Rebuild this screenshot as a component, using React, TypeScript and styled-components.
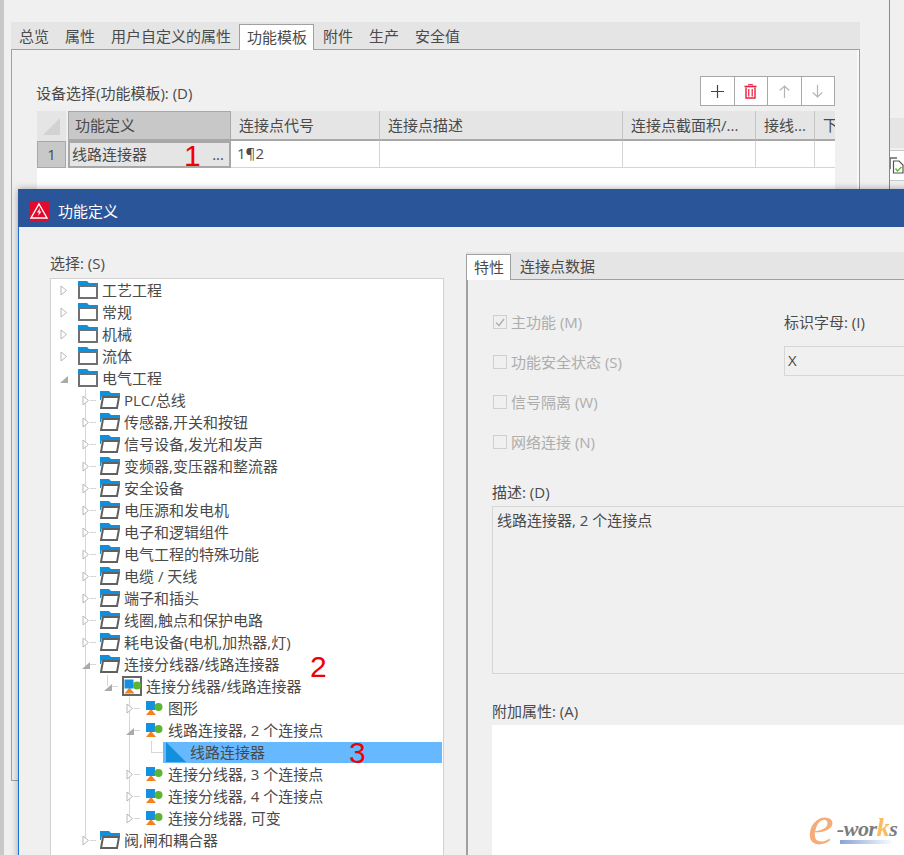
import React from "react";
import styled, { createGlobalStyle } from "styled-components";

type NodeIcon = "closed" | "open" | "framed" | "type" | "item";

interface TreeNode {
  label: string;
  depth: number;
  icon: NodeIcon;
  expander?: "closed" | "open";
  selected?: boolean;
  // vertical tree lines: [column, "full" or "top"]
  guides?: [number, "full" | "top"][];
}

const branch = (label: string, extra: Partial<TreeNode> = {}): TreeNode => ({
  label,
  depth: 1,
  icon: "open",
  expander: "closed",
  guides: [[1, "full"]],
  ...extra,
});

const root = (label: string, expander: "closed" | "open" = "closed"): TreeNode => ({
  label,
  depth: 0,
  icon: "closed",
  expander,
});

const typeNode = (label: string, extra: Partial<TreeNode> = {}): TreeNode => ({
  label,
  depth: 3,
  icon: "type",
  expander: "closed",
  guides: [[1, "full"], [3, "full"]],
  ...extra,
});

const treeNodes: TreeNode[] = [
  root("工艺工程"),
  root("常规"),
  root("机械"),
  root("流体"),
  root("电气工程", "open"),
  branch("PLC/总线"),
  branch("传感器,开关和按钮"),
  branch("信号设备,发光和发声"),
  branch("变频器,变压器和整流器"),
  branch("安全设备"),
  branch("电压源和发电机"),
  branch("电子和逻辑组件"),
  branch("电气工程的特殊功能"),
  branch("电缆 / 天线"),
  branch("端子和插头"),
  branch("线圈,触点和保护电路"),
  branch("耗电设备(电机,加热器,灯)"),
  branch("连接分线器/线路连接器", { expander: "open" }),
  {
    label: "连接分线器/线路连接器",
    depth: 2,
    icon: "framed",
    expander: "open",
    guides: [[1, "full"], [2, "top"]],
  },
  typeNode("图形"),
  typeNode("线路连接器, 2 个连接点", { expander: "open" }),
  {
    label: "线路连接器",
    depth: 4,
    icon: "item",
    selected: true,
    guides: [[1, "full"], [3, "full"], [4, "top"]],
  },
  typeNode("连接分线器, 3 个连接点"),
  typeNode("连接分线器, 4 个连接点"),
  typeNode("连接分线器, 可变", { guides: [[1, "full"], [3, "top"]] }),
  branch("阀,闸和耦合器", { guides: [[1, "top"]] }),
];

const mainTabs = ["总览", "属性", "用户自定义的属性", "功能模板", "附件", "生产", "安全值"];
const headers = [
  { label: "连接点代号", width: 149 },
  { label: "连接点描述", width: 243 },
  { label: "连接点截面积/...", width: 133 },
  { label: "接线...", width: 59 },
  { label: "下", width: 40 },
];
const checks = [
  { label: "主功能 (M)", checked: true },
  { label: "功能安全状态 (S)", checked: false },
  { label: "信号隔离 (W)", checked: false },
  { label: "网络连接 (N)", checked: false },
];

const GlobalStyle = createGlobalStyle`
  html, body {
    margin: 0;
    padding: 0;
    background: #f0f0f0;
  }
  * {
    box-sizing: border-box;
  }
`;

const Page = styled.div`
  position: relative;
  display: flex;
  width: 904px;
  height: 855px;
  overflow: hidden;
  background: #f0f0f0;
  color: #4a4a4a;
  font: 15px/20px "Open Sans", "Noto Sans CJK SC", sans-serif;
`;

const EdgeStripe = styled.div`
  flex: none;
  width: 4px;
  background: #c8c8c8;
`;

const BackWindow = styled.div`
  flex: none;
  width: 849px;
  margin: 22px 0 0 7px;
`;

const TabStrip = styled.div`
  display: flex;
  height: 27px;
  background: #e5e5e5;
`;

const MainTab = styled.div<{ $active?: boolean }>`
  position: relative;
  z-index: 1;
  height: ${(p) => (p.$active ? "26px" : "27px")};
  margin-top: ${(p) => (p.$active ? "2px" : "0")};
  margin-right: ${(p) => (p.$active ? "1px" : "0")};
  padding: 0 ${(p) => (p.$active ? "6px 0 7px" : "8px")};
  line-height: ${(p) => (p.$active ? "24px" : "28px")};
  background: ${(p) => (p.$active ? "#fff" : "transparent")};
  border: ${(p) => (p.$active ? "1px solid #a0a0a0" : "none")};
  border-bottom: none;
`;

const Pane = styled.div`
  height: 732px;
  padding: 26px 24px 0 25px;
  border: 1px solid #a0a0a0;
  box-shadow: inset -2px 0 0 #fafafa;
`;

const PaneHead = styled.div`
  display: flex;
  align-items: flex-end;
  justify-content: space-between;
  height: 30px;
  margin-bottom: 5px;
`;

const PaneLabel = styled.div`
  margin: 0 0 3px -1px;
`;

const Toolbar = styled.div`
  display: flex;
  width: 135px;
  height: 30px;
`;

const ToolButton = styled.div`
  flex: 1;
  display: flex;
  align-items: center;
  justify-content: center;
  background: #fff;
  border: 1px solid #a8a8a8;
  & + & {
    margin-left: -1px;
  }
`;

const Table = styled.div`
  width: 798px;
  height: 90px;
  overflow: hidden;
  background: #fff;
`;

const TableRow = styled.div<{ $height: number }>`
  display: flex;
  height: ${(p) => p.$height}px;
  background: #f0f0f0;
`;

const CornerCell = styled.div`
  flex: none;
  display: flex;
  align-items: center;
  justify-content: center;
  width: 31px;
  border-right: 2px solid #f0f0f0;
  background: #e5e5e5;
`;

const ActiveHead = styled.div`
  flex: none;
  width: 163px;
  padding: 0 6px;
  line-height: 27px;
  background: #c8c8c8;
  border: 1px solid #a8a8a8;
  border-bottom-width: 2px;
`;

const HeadCell = styled.div<{ $width: number }>`
  flex: none;
  width: ${(p) => p.$width}px;
  padding: 0 8px;
  line-height: 28px;
  white-space: nowrap;
  background: #e5e5e5;
  border-right: 1px solid #c4c4c4;
  border-bottom: 2px solid #a8a8a8;
`;

const RowNumber = styled.div`
  flex: none;
  width: 31px;
  border-right: 2px solid #f0f0f0;
  background: #c8c8c8;
  box-shadow: inset 0 0 0 1px #a8a8a8;
  text-align: center;
  line-height: 26px;
`;

const EditCell = styled.div`
  flex: none;
  display: flex;
  align-items: center;
  justify-content: space-between;
  width: 163px;
  padding: 0 5px 2px 2px;
  background: #e5e5e5;
  border: 2px solid #a8a8a8;
`;

const Ellipsis = styled.span`
  line-height: 28px;
`;

const BodyCell = styled.div<{ $width: number }>`
  flex: none;
  width: ${(p) => p.$width}px;
  padding: 0 6px;
  line-height: 25px;
  background: #fff;
  border-right: 1px solid #d4d4d4;
  border-bottom: 1px solid #d4d4d4;
`;

const SideWindow = styled.div`
  flex: 1;
  height: 189px;
  margin-left: 29px;
  padding-top: 118px;
  border-left: 1px solid #888;
`;

const SideBand = styled.div`
  height: 30px;
  background: #e5e5e5;
`;

const SideList = styled.div`
  display: flex;
  align-items: center;
  height: 31px;
  margin-top: 2px;
  background: #fff;
  border-top: 1px solid #c8c8c8;
  border-bottom: 1px solid #c8c8c8;
`;

// the dialog floats above the window behind it
const Dialog = styled.div`
  position: absolute;
  z-index: 2;
  left: 18px;
  top: 189px;
  width: 900px;
  height: 680px;
  background: #f0f0f0;
  border-left: 1px solid #1a6fd4;
  box-shadow: 0 0 7px rgba(0, 0, 0, 0.35);
`;

const TitleBar = styled.div`
  display: flex;
  align-items: center;
  gap: 9px;
  height: 38px;
  margin-left: -1px;
  padding: 5px 0 0 11px;
  background: #2a5599;
  color: #fff;
`;

const DialogBody = styled.div`
  display: flex;
  gap: 22px;
  padding: 25px 0 0 31px;
`;

const LeftColumn = styled.div`
  flex: none;
  width: 394px;
  padding-top: 1px;
`;

const FieldLabel = styled.div<{ $gap?: number; $top?: number }>`
  height: 20px;
  margin-top: ${(p) => p.$top ?? 0}px;
  margin-bottom: ${(p) => p.$gap ?? 4}px;
`;

const TreeBox = styled.div`
  height: 600px;
  background: #fff;
  border: 1px solid #d2d2d2;
  border-bottom: none;
`;

const Row = styled.div<{ $depth: number }>`
  position: relative;
  display: flex;
  align-items: center;
  height: 22px;
  padding-left: ${(p) => 9 + p.$depth * 22}px;
  white-space: nowrap;
`;

const Guide = styled.span<{ $column: number; $part: "full" | "top" }>`
  position: absolute;
  left: ${(p) => 12 + p.$column * 22}px;
  top: 0;
  width: 1px;
  height: ${(p) => (p.$part === "full" ? "22px" : "11px")};
  background: #d6d6d6;
`;

const Dash = styled.span<{ $depth: number; $leaf?: boolean }>`
  position: absolute;
  left: ${(p) => (p.$leaf ? 12 : 17) + p.$depth * 22}px;
  top: 11px;
  width: ${(p) => (p.$leaf ? 12 : 6)}px;
  height: 1px;
  background: #d6d6d6;
`;

const ExpanderSlot = styled.span`
  position: relative;
  z-index: 1;
  flex: none;
  display: flex;
  width: 8px;
  height: 11px;
  margin-right: 10px;
`;

const Item = styled.div<{ $selected?: boolean }>`
  position: relative;
  z-index: 1;
  flex: 1;
  display: flex;
  align-items: center;
  gap: 4px;
  height: 21px;
  margin: 0 1px 0 -3px;
  padding-left: 3px;
  background: ${(p) => (p.$selected ? "#66b8ff" : "transparent")};
`;

const IconSlot = styled.span`
  flex: none;
  display: flex;
  width: 20px;
  height: 20px;
  align-items: center;
  justify-content: center;
`;

const RightColumn = styled.div`
  flex: none;
  width: 470px;
`;

const SubTabStrip = styled.div`
  display: flex;
  height: 28px;
  background: #e5e5e5;
`;

const SubTab = styled.div<{ $active?: boolean }>`
  height: ${(p) => (p.$active ? "26px" : "27px")};
  margin-top: ${(p) => (p.$active ? "2px" : "0")};
  padding: 0 ${(p) => (p.$active ? "6px 0 7px" : "9px")};
  line-height: ${(p) => (p.$active ? "24px" : "28px")};
  background: ${(p) => (p.$active ? "#fff" : "transparent")};
  border: ${(p) => (p.$active ? "1px solid #a0a0a0" : "none")};
  border-bottom: none;
`;

const SubPane = styled.div`
  height: 620px;
  margin-top: -1px;
  padding: 32px 0 0 24px;
  border-top: 1px solid #a0a0a0;
  border-left: 2px solid #a0a0a0;
`;

const OptionGrid = styled.div`
  display: grid;
  grid-template-columns: 292px 1fr;
`;

const CheckList = styled.div`
  display: flex;
  flex-direction: column;
  gap: 20px;
`;

const CheckRow = styled.div`
  display: flex;
  align-items: center;
  gap: 4px;
  height: 20px;
  margin-left: 1px;
  color: #adadad;
`;

const CheckBox = styled.span`
  display: flex;
  align-items: center;
  justify-content: center;
  width: 14px;
  height: 14px;
  border: 1px solid #cfcfcf;
`;

const SelectBox = styled.div`
  height: 30px;
  padding-left: 3px;
  line-height: 26px;
  border: 1px solid #d6d6d6;
`;

const DescriptionBox = styled.div`
  height: 168px;
  margin-bottom: 27px;
  padding: 3px 4px;
  border: 1px solid #d6d6d6;
`;

const AttributesBox = styled.div`
  height: 200px;
  background: #fff;
`;

const Mark = styled.span<{ $x: number; $y: number }>`
  position: absolute;
  z-index: 3;
  left: ${(p) => p.$x}px;
  top: ${(p) => p.$y}px;
  color: #f00000;
  font: 30px/30px "Liberation Sans", sans-serif;
`;

const Watermark = styled.div`
  position: absolute;
  z-index: 3;
  left: 808px;
  top: 796px;
  display: flex;
  align-items: baseline;
  font-family: "Liberation Serif", serif;
  font-style: italic;
  font-weight: 700;
  color: #7c7c7c;
`;

const WatermarkE = styled.span`
  font-size: 58px;
  line-height: 58px;
  font-weight: 400;
  color: #f6ac78;
`;

const WatermarkWord = styled.span`
  position: relative;
  top: -8px;
  margin-left: 3px;
  font-size: 22px;
  letter-spacing: -0.4px;
`;

const WatermarkK = styled.span`
  color: #f8bd5c;
  font-size: 26px;
`;

const WatermarkBar = styled.div`
  position: absolute;
  z-index: 3;
  left: 840px;
  top: 840px;
  width: 52px;
  height: 4px;
  background: linear-gradient(90deg, #8aa2dc, rgba(138, 162, 220, 0.05));
`;

const WarningIcon = () => (
  <svg width="20" height="20" viewBox="0 0 20 20">
    <rect width="20" height="20" rx="2" fill="#e30b2d" />
    <path d="M10 3 L18 17 H2 Z" fill="none" stroke="#fff" strokeWidth="1.4" />
    <path d="M11 7 L8 11.5 H10 L9 15 L12.5 10.5 H10.5 Z" fill="#fff" />
  </svg>
);

const PlusIcon = () => (
  <svg width="15" height="15" viewBox="0 0 15 15">
    <path d="M7.5 1 V14 M1 7.5 H14" stroke="#444" strokeWidth="1.2" fill="none" />
  </svg>
);

const TrashIcon = () => (
  <svg width="13" height="15" viewBox="0 0 13 15" fill="none" stroke="#ee1c3e">
    <path d="M4.5 1.5 V0.6 H8.5 V1.5" strokeWidth="1" />
    <path d="M0.5 2.5 H12.5" strokeWidth="1.6" />
    <path d="M2 3.5 V14 H11 V3.5" strokeWidth="1.4" />
    <path d="M4.8 5 V12.5 M8.2 5 V12.5" strokeWidth="1.2" />
  </svg>
);

const ArrowIcon = ({ down }: { down?: boolean }) => (
  <svg width="11" height="13" viewBox="0 0 11 13" fill="none" stroke="#b4b4b4" strokeWidth="1.2">
    {down ? <path d="M5.5 0 V12 M0.8 7.5 L5.5 12 L10.2 7.5" /> : <path d="M5.5 13 V1 M0.8 5.5 L5.5 1 L10.2 5.5" />}
  </svg>
);

const CornerMark = () => (
  <svg width="17" height="17" viewBox="0 0 17 17">
    <path d="M0 17 L17 0 V17 Z" fill="#d2d2d2" />
  </svg>
);

const FileCheckIcon = () => (
  <svg width="14" height="17" viewBox="0 0 14 17" fill="none">
    <path d="M0 1 H7 M0 1 V12" stroke="#666" strokeWidth="1.6" />
    <path d="M3.5 4 H9 L13 8 V16 H3.5 Z" fill="#fff" stroke="#555" strokeWidth="1.2" />
    <path d="M5.5 11.5 L7.5 14 L11.5 10" stroke="#5cb531" strokeWidth="1.3" />
  </svg>
);

const ExpanderIcon = ({ open }: { open: boolean }) =>
  open ? (
    <svg width="8" height="11" viewBox="0 0 8 11">
      <path d="M0 10 L8 3 V10 Z" fill="#aaa" />
    </svg>
  ) : (
    <svg width="8" height="11" viewBox="0 0 8 11">
      <path d="M1 1 L6.5 5.5 L1 10 Z" fill="#fff" stroke="#b8b8b8" />
    </svg>
  );

const ClosedFolder = () => (
  <svg width="20" height="18" viewBox="0 0 20 18">
    <rect x="1" y="5" width="18" height="12" fill="#fff" stroke="#707070" strokeWidth="2" />
    <path d="M0 0 H9 L11 2 H20 V5 H0 Z" fill="#0f8fdc" />
  </svg>
);

const OpenFolder = () => (
  <svg width="20" height="18" viewBox="0 0 20 18">
    <path d="M3 6 H19 L17 17 H1 Z" fill="#fff" stroke="#606060" strokeWidth="2" />
    <path d="M0 0 H9 L11 2 H20 V5 H2 L1 9 H0 Z" fill="#0f8fdc" />
  </svg>
);

const TypeGlyph = () => (
  <>
    <path d="M0 15 L5 9 L10 15 Z" fill="#f58220" />
    <rect x="0" y="1" width="9" height="9" fill="#1390e0" />
    <circle cx="12.5" cy="7" r="4" fill="#5cb531" />
  </>
);

const TypeIcon = () => (
  <svg width="17" height="16" viewBox="0 0 17 16">
    <TypeGlyph />
  </svg>
);

const FramedTypeIcon = () => (
  <svg width="20" height="20" viewBox="0 0 20 20">
    <rect x="1" y="1" width="18" height="18" fill="#fff" stroke="#666" strokeWidth="2" />
    <g transform="translate(2.5 2.5)">
      <TypeGlyph />
    </g>
  </svg>
);

const ItemIcon = () => (
  <svg width="20" height="20" viewBox="0 0 20 20">
    <path d="M0 0 L20 20 H0 Z" fill="#1090dd" />
  </svg>
);

const nodeIcons: Record<NodeIcon, React.ReactNode> = {
  closed: <ClosedFolder />,
  open: <OpenFolder />,
  framed: <FramedTypeIcon />,
  type: <TypeIcon />,
  item: <ItemIcon />,
};

const App: React.FC = () => {
  return (
    <Page>
      <GlobalStyle />
      <EdgeStripe />
      <BackWindow>
        <TabStrip>
          {mainTabs.map((tab) => (
            <MainTab key={tab} $active={tab === "功能模板"}>
              {tab}
            </MainTab>
          ))}
        </TabStrip>
        <Pane>
          <PaneHead>
            <PaneLabel>设备选择(功能模板): (D)</PaneLabel>
            <Toolbar>
              <ToolButton>
                <PlusIcon />
              </ToolButton>
              <ToolButton>
                <TrashIcon />
              </ToolButton>
              <ToolButton>
                <ArrowIcon />
              </ToolButton>
              <ToolButton>
                <ArrowIcon down />
              </ToolButton>
            </Toolbar>
          </PaneHead>
          <Table>
            <TableRow $height={30}>
              <CornerCell>
                <CornerMark />
              </CornerCell>
              <ActiveHead>功能定义</ActiveHead>
              {headers.map((h) => (
                <HeadCell key={h.label} $width={h.width}>
                  {h.label}
                </HeadCell>
              ))}
            </TableRow>
            <TableRow $height={27}>
              <RowNumber>1</RowNumber>
              <EditCell>
                线路连接器
                <Ellipsis>...</Ellipsis>
              </EditCell>
              {headers.map((h, i) => (
                <BodyCell key={h.label} $width={h.width}>
                  {i === 0 ? "1¶2" : ""}
                </BodyCell>
              ))}
            </TableRow>
          </Table>
        </Pane>
      </BackWindow>
      <SideWindow>
        <SideBand />
        <SideList>
          <FileCheckIcon />
        </SideList>
      </SideWindow>

      <Dialog>
        <TitleBar>
          <WarningIcon />
          功能定义
        </TitleBar>
        <DialogBody>
          <LeftColumn>
            <FieldLabel $gap={5}>选择: (S)</FieldLabel>
            <TreeBox>
              {treeNodes.map((node, i) => (
                <Row key={i} $depth={node.depth}>
                  {node.guides?.map(([column, part]) => (
                    <Guide key={column} $column={column} $part={part} />
                  ))}
                  {node.depth > 0 && <Dash $depth={node.depth} $leaf={node.icon === "item"} />}
                  <ExpanderSlot>
                    {node.expander && <ExpanderIcon open={node.expander === "open"} />}
                  </ExpanderSlot>
                  <Item $selected={node.selected}>
                    <IconSlot>{nodeIcons[node.icon]}</IconSlot>
                    {node.label}
                  </Item>
                </Row>
              ))}
            </TreeBox>
          </LeftColumn>
          <RightColumn>
            <SubTabStrip>
              <SubTab $active>特性</SubTab>
              <SubTab>连接点数据</SubTab>
            </SubTabStrip>
            <SubPane>
              <OptionGrid>
                <CheckList>
                  {checks.map((c) => (
                    <CheckRow key={c.label}>
                      <CheckBox>
                        {c.checked && (
                          <svg width="10" height="9" viewBox="0 0 10 9" fill="none">
                            <path d="M1 4.5 L4 7.5 L9 1" stroke="#b4b4b4" strokeWidth="1.6" />
                          </svg>
                        )}
                      </CheckBox>
                      {c.label}
                    </CheckRow>
                  ))}
                </CheckList>
                <div>
                  <FieldLabel $gap={14}>标识字母: (I)</FieldLabel>
                  <SelectBox>X</SelectBox>
                </div>
              </OptionGrid>
              <FieldLabel $top={30}>描述: (D)</FieldLabel>
              <DescriptionBox>线路连接器, 2 个连接点</DescriptionBox>
              <FieldLabel>附加属性: (A)</FieldLabel>
              <AttributesBox />
            </SubPane>
          </RightColumn>
        </DialogBody>
      </Dialog>

      <Mark $x={184} $y={141}>1</Mark>
      <Mark $x={310} $y={652}>2</Mark>
      <Mark $x={349} $y={738}>3</Mark>

      <Watermark>
        <WatermarkE>e</WatermarkE>
        <WatermarkWord>
          -wor<WatermarkK>k</WatermarkK>s
        </WatermarkWord>
      </Watermark>
      <WatermarkBar />
    </Page>
  );
};

export default App;
